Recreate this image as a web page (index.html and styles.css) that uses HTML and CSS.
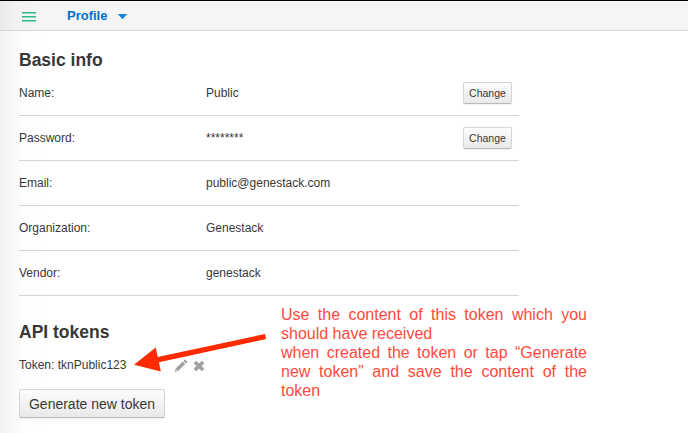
FILE: index.html
```html
<!DOCTYPE html>
<html lang="en">
<head>
<meta charset="utf-8">
<title>Profile</title>
<link rel="stylesheet" href="styles.css">
</head>
<body>
<header class="topbar">
  <svg class="menu-icon" width="14" height="10" viewBox="0 0 14 10"><path fill="#2dbb87" d="M0 0h14v1.5H0zM0 4h14v1.5H0zM0 8h14v1.5H0z"/></svg>
  <span class="page-name">Profile</span>
  <svg class="caret" width="9" height="5" viewBox="0 0 9 5"><path fill="#1683dc" d="M.4 0h8.2q.5.1.2.5L5 4.7q-.5.4-1 0L.2.5Q-.1.1.4 0z"/></svg>
</header>
<main class="content">
  <h2>Basic info</h2>
  <div class="info">
    <div class="row"><span class="label">Name:</span><span class="value">Public</span><button class="change">Change</button></div>
    <div class="row"><span class="label">Password:</span><span class="value">********</span><button class="change">Change</button></div>
    <div class="row"><span class="label">Email:</span><span class="value">public@genestack.com</span></div>
    <div class="row"><span class="label">Organization:</span><span class="value">Genestack</span></div>
    <div class="row"><span class="label">Vendor:</span><span class="value">genestack</span></div>
  </div>
  <h2 class="tokens-title">API tokens</h2>
  <div class="token">
    <span class="token-name">Token: tknPublic123</span>
    <svg class="edit" width="14" height="14" viewBox="0 0 14 14"><path fill="#a0a0a0" d="M.8 13l.9-3.4 7-7 2.5 2.5-7 7zM9.4 1.9l1-1q.6-.6 1.2 0l1.3 1.3q.6.6 0 1.2l-1 1z"/><path fill="#fff" d="M2.2 10.6l1 1-.9.3-.4-.4z"/></svg>
    <svg class="remove" width="12" height="12" viewBox="0 0 12 12"><path stroke="#a0a0a0" stroke-width="3.6" d="M1.9 1.9l8.2 8.2M10.1 1.9l-8.2 8.2"/></svg>
  </div>
  <button class="generate">Generate new token</button>
</main>
<svg class="arrow" width="134" height="42" viewBox="0 0 134 42"><path fill="#ff2a00" d="M0 30.7L21.7 13.6l2 9.3L131 0l1.1 5.1L24.9 28.2l2 9.3z"/></svg>
<div class="note">
  <p>Use the content of this token which you should have received</p>
  <p>when created the token or tap “Generate new token” and save the content of the token</p>
</div>
</body>
</html>
```
FILE: styles.css
```css
* { box-sizing: border-box; }
body {
  margin: 0;
  height: 433px;
  overflow: hidden;
  position: relative;
  background: linear-gradient(90deg, #f0f0f0 0, #f9f9f9 12px, #fdfdfd 26px, #fff 42px);
  color: #383838;
  font: 12px/16px "Liberation Sans", Arial, sans-serif;
}
.topbar {
  display: flex;
  align-items: center;
  height: 31px;
  padding: 1px 22px 0;
  border-top: 1px solid #000;
  border-bottom: 1px solid #d3d3d3;
  background: linear-gradient(90deg, #e9e9e9 0, #f1f1f1 14px, #f5f5f5 40px);
}
.menu-icon { margin-top: 2px; }
.page-name {
  margin-left: 31px;
  color: #0070cc;
  font-size: 13px;
  font-weight: bold;
}
.caret { margin: 1px 0 0 11px; }
.content { padding: 17px 19px; }
h2 {
  margin: 0;
  font-size: 17.5px;
  line-height: 24px;
}
.info { width: 500px; margin-top: -1px; }
.row {
  display: flex;
  align-items: center;
  height: 45px;
  padding-right: 7px;
  border-bottom: 1px solid #d3d3d3;
}
.label { width: 187px; }
.value { flex: 1; }
button {
  border: 1px solid #d5d5d5;
  border-bottom-color: #b8b8b8;
  border-radius: 2px;
  background: linear-gradient(#fcfcfc, #e9e9e9);
  box-shadow: 0 1px 1px rgba(0, 0, 0, .06);
  color: #383838;
  font-family: inherit;
  padding: 0;
}
.change { width: 49px; height: 22px; font-size: 10.5px; }
.tokens-title { margin-top: 24px; }
.token {
  display: flex;
  align-items: center;
  height: 16px;
  margin-top: 13px;
}
.token-name { width: 155px; }
.edit { margin-top: 2px; }
.remove { margin: 2px 0 0 5px; }
.generate {
  display: block;
  width: 146px;
  height: 29px;
  margin-top: 16px;
  font-size: 14px;
}
.arrow { position: absolute; left: 134px; top: 334px; }
.note {
  position: absolute;
  left: 281px;
  top: 305px;
  width: 306px;
  color: #ff4a3d;
  font-size: 16px;
  line-height: 19px;
  text-align: justify;
}
.note p { margin: 0; }
```
